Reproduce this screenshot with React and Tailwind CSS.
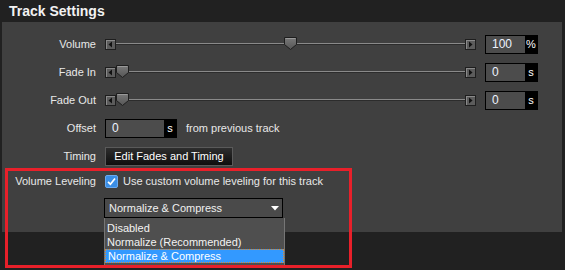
import React from "react";

const ArrowBtn = ({ dir }) => (
  <div className="w-[11px] h-[11px] shrink-0 border border-[#1e1e1e] bg-[#5c5c5c] flex items-center justify-center shadow-[inset_1px_1px_0_#8a8a8a]">
    <svg width="5" height="7" viewBox="0 0 5 7">
      {dir === "left" ? (
        <path d="M4 0.5 L0.5 3.5 L4 6.5 Z" fill="#111" />
      ) : (
        <path d="M1 0.5 L4.5 3.5 L1 6.5 Z" fill="#111" />
      )}
    </svg>
  </div>
);

const Thumb = ({ left }) => (
  <svg
    className="absolute top-[-6px]"
    style={{ left }}
    width="13"
    height="13"
    viewBox="0 0 13 13"
  >
    <defs>
      <linearGradient id="tg" x1="0" y1="0" x2="0" y2="1">
        <stop offset="0" stopColor="#7a7a7a" />
        <stop offset="1" stopColor="#555" />
      </linearGradient>
    </defs>
    <path d="M0.5 0.5 H12.5 V7.5 L6.5 12.5 L0.5 7.5 Z" fill="url(#tg)" stroke="#1e1e1e" />
    <path d="M1.5 1.5 H11.5" stroke="#999" />
  </svg>
);

const Slider = ({ thumb }) => (
  <div className="flex items-center w-[371px]">
    <ArrowBtn dir="left" />
    <div className="relative flex-1 h-[2px] bg-[#8a8a8a] border-b border-[#2c2c2c]">
      <Thumb left={thumb} />
    </div>
    <ArrowBtn dir="right" />
  </div>
);

const NumInput = ({ value, unit, width = 39 }) => (
  <div className="flex h-[19px] border border-black">
    <div
      className="bg-[#4c4c4c] pl-[6px] flex items-center text-[12px] text-[#eef3ff]"
      style={{ width }}
    >
      {value}
    </div>
    <div className="w-[12px] bg-black flex items-center justify-center text-[11px] text-white">
      {unit}
    </div>
  </div>
);

const Row = ({ label, children, h = "h-[28px]" }) => (
  <div className={`flex items-center ${h}`}>
    <div className="w-[94px] text-right text-[11px] text-[#e8e8e8]">{label}</div>
    <div className="ml-[9px] flex items-center">{children}</div>
  </div>
);

export default function App() {
  return (
    <div
      className="relative w-[565px] h-[270px] overflow-hidden bg-[#212121] text-white"
      style={{ fontFamily: '"Liberation Sans", Arial, sans-serif' }}
    >
      {/* HEADER */}
      <div className="h-[22px] pl-[9px] flex items-center text-[14px] font-bold text-[#f2f2f2]">
        Track Settings
      </div>

      {/* PANEL */}
      <div className="ml-[2px] w-[560px] h-[210px] bg-[#404040] pt-[8px]">
        <Row label="Volume">
          <Slider thumb={168} />
          <div className="ml-[9px]">
            <NumInput value="100" unit="%" />
          </div>
        </Row>
        <Row label="Fade In">
          <Slider thumb={0} />
          <div className="ml-[9px]">
            <NumInput value="0" unit="s" />
          </div>
        </Row>
        <Row label="Fade Out">
          <Slider thumb={0} />
          <div className="ml-[9px]">
            <NumInput value="0" unit="s" />
          </div>
        </Row>
        <Row label="Offset">
          <NumInput value="0" unit="s" width={58} />
          <span className="ml-[9px] text-[11px] text-[#e8e8e8]">from previous track</span>
        </Row>
        <Row label="Timing">
          <button className="w-[128px] h-[19px] border border-[#5a5a5a] bg-gradient-to-b from-[#2e2e2e] to-[#0e0e0e] text-[11px] text-white flex items-center justify-center">
            Edit Fades and Timing
          </button>
        </Row>
        <Row label="Volume Leveling" h="h-[22px]">
          <div className="w-[13px] h-[13px] rounded-[2px] bg-[#3a8ee6] border border-[#6aaaf0] flex items-center justify-center">
            <svg width="9" height="9" viewBox="0 0 9 9">
              <path d="M1 4.8 L3.4 7.2 L8 1.5" fill="none" stroke="#fff" strokeWidth="1.7" />
            </svg>
          </div>
          <span className="ml-[5px] text-[11px] text-[#e8e8e8]">
            Use custom volume leveling for this track
          </span>
        </Row>
        <div className="mt-[6px] ml-[102px] w-[179px] h-[20px] border border-black bg-[#4a4a4a] flex items-center justify-between pl-[4px] pr-[3px]">
          <span className="text-[11px] text-[#f0f0f0]">Normalize &amp; Compress</span>
          <svg width="8" height="5" viewBox="0 0 8 5">
            <path d="M0 0 H8 L4 4.5 Z" fill="#fff" />
          </svg>
        </div>
      </div>

      {/* DROPDOWN LIST */}
      <div className="absolute left-[104px] top-[218px] w-[181px] h-[50px] bg-[#4f4f4f] border-l border-r border-[#767676] pt-[3px] text-[11px] text-[#f2f2f2]">
        <div className="h-[14px] pl-[2px] flex items-center">Disabled</div>
        <div className="h-[14px] pl-[2px] flex items-center">Normalize (Recommended)</div>
        <div className="h-[14px] pl-[2px] flex items-center bg-[#3399ff] border border-dotted border-[#e08a2a] text-white">
          Normalize &amp; Compress
        </div>
      </div>

      {/* HIGHLIGHT BOX */}
      <div className="absolute left-[5px] top-[168px] w-[347px] h-[100px] border-[3px] border-[#e8202a]" />
    </div>
  );
}
